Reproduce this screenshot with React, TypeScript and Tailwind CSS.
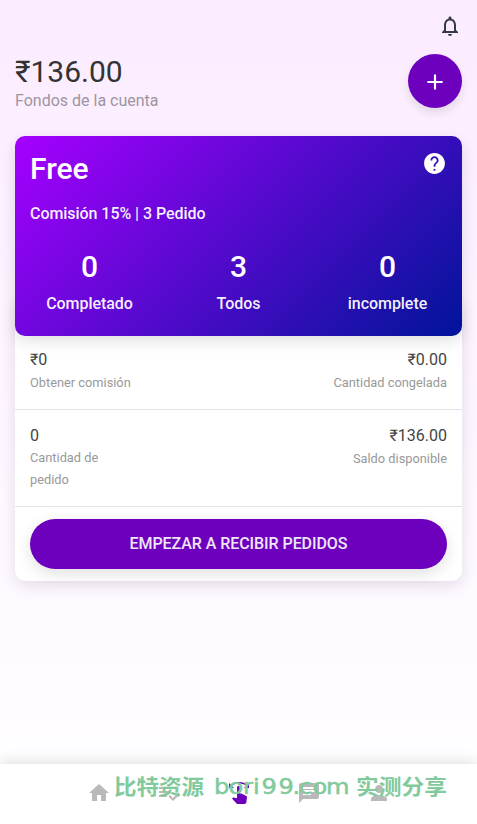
import React from "react";
import { MdAdd, MdChat, MdHome, MdNotificationsNone, MdPerson, MdSwipe } from "react-icons/md";

const stats = [
    { value: "0", label: "Completado" },
    { value: "3", label: "Todos" },
    { value: "0", label: "incomplete" },
];

type IconProps = { className?: string };

const tabs = [
    { name: "home", Icon: MdHome },
    { name: "orders", Icon: ListCheck },
    { name: "grab", Icon: MdSwipe, active: true },
    { name: "chat", Icon: MdChat },
    { name: "profile", Icon: MdPerson },
];

export default function App() {
    return (
        <div className="relative flex h-[824px] w-full flex-col overflow-hidden bg-linear-to-b from-[#fbecff] to-white font-[Roboto,sans-serif] text-[#333]">
            <Header />
            <main className="mt-7 flex-1 px-[15px]">
                <PlanCard />
                <Balances />
            </main>
            <TabBar />
            <Watermark />
        </div>
    );
}

function Header() {
    return (
        <header className="px-[15px]">
            <div className="flex h-[54px] justify-end pt-[14px]">
                <MdNotificationsNone className="size-6 text-[#343a40]" />
            </div>
            <div className="flex h-[54px] justify-between">
                <div>
                    <h1 className="text-[30px] leading-9">₹136.00</h1>
                    <p className="text-base leading-[22px] text-[#9d95a0]">Fondos de la cuenta</p>
                </div>
                <button className="flex size-[54px] items-center justify-center rounded-full bg-[#6c00bd] pt-0.5 text-white shadow-[0_5px_10px_rgba(0,0,0,0.1)]">
                    <MdAdd className="size-[26px]" />
                </button>
            </div>
        </header>
    );
}

function PlanCard() {
    return (
        <section className="relative z-10 h-[200px] rounded-[10px] bg-[linear-gradient(135deg,#a600ff_0%,#001499_100%)] px-[15px] pt-[15px] text-white shadow-[0_5px_15px_rgba(0,0,0,0.12)]">
            <div className="flex justify-between">
                <h2 className="text-[30px] leading-9 font-medium">Free</h2>
                <HelpIcon className="size-[25px]" />
            </div>
            <p className="mt-4 text-base leading-[22px] font-medium tracking-[-0.05px] text-white/95">Comisión 15% | 3 Pedido</p>
            <div className="-mx-[15px] mt-6 grid grid-cols-3 text-center">
                {stats.map(stat => (
                    <div key={stat.label}>
                        <div className="text-[30px] leading-9 font-medium">{stat.value}</div>
                        <div className="mt-2 text-base leading-[22px] font-medium tracking-[-0.05px] text-white/95">{stat.label}</div>
                    </div>
                ))}
            </div>
        </section>
    );
}

function Balances() {
    return (
        <section className="-mt-10 rounded-[10px] bg-white pt-10 shadow-[0_5px_15px_rgba(60,0,80,0.12)]">
            <div className="flex h-[74px] justify-between border-b border-[#e3e3e5] px-[15px] pt-3">
                <Amount value="₹0" label="Obtener comisión" />
                <Amount value="₹0.00" label="Cantidad congelada" right />
            </div>
            <div className="flex h-[97px] justify-between border-b border-[#e3e3e5] px-[15px] pt-[14px]">
                <Amount value="0" label="Cantidad de pedido" narrow />
                <Amount value="₹136.00" label="Saldo disponible" right />
            </div>
            <div className="px-[15px] py-3">
                <button className="h-[50px] w-full rounded-full bg-[#6c00bd] text-base font-medium tracking-[-0.06px] text-white/90 shadow-[0_5px_15px_rgba(0,0,0,0.12)]">
                    EMPEZAR A RECIBIR PEDIDOS
                </button>
            </div>
        </section>
    );
}

type AmountProps = {
    value: string;
    label: string;
    right?: boolean;
    narrow?: boolean;
};
function Amount({ value, label, right, narrow }: AmountProps) {
    return (
        <div className={right ? "text-right" : narrow ? "w-[90px]" : ""}>
            <div className="text-base leading-6 text-[#444]">{value}</div>
            <div className={narrow ? "-mt-px text-[12.8px] leading-[22px] text-[#999]" : "text-[12.8px] leading-[22px] text-[#999]"}>{label}</div>
        </div>
    );
}

function TabBar() {
    return (
        <nav className="flex h-[60px] justify-center bg-white pt-[17px] shadow-[0_0_15px_rgba(0,0,0,0.16)]">
            {tabs.map(({ name, Icon, active }) => (
                <a key={name} className={active ? "flex w-[70px] justify-center text-[#6c00bd]" : "flex w-[70px] justify-center text-[#b9b9b9]"}>
                    <Icon className="size-6" />
                </a>
            ))}
        </nav>
    );
}

function ListCheck({ className }: IconProps) {
    return (
        <svg viewBox="0 0 24 24" fill="currentColor" className={className}>
            <path d="M14 10H2v2h12v-2zm0-4H2v2h12V6zM2 16h8v-2H2v2zm19.5-4.5L23 13l-6.99 7-4.51-4.5L13 14l3.01 3 5.49-5.5z" />
        </svg>
    );
}

function HelpIcon({ className }: IconProps) {
    return (
        <svg viewBox="0 0 24 24" fill="currentColor" className={className}>
            <path d="M12 2C6.48 2 2 6.48 2 12s4.48 10 10 10 10-4.48 10-10S17.52 2 12 2zm.8 17h-1.6v-1.8h1.6V19zm2.07-7.75l-.9.92C13.25 12.9 12.8 13.5 12.8 15h-1.6v-.5c0-1.1.45-2.1 1.17-2.83l1.24-1.26c.37-.36.59-.86.59-1.41 0-1.2-1-2.2-2.2-2.2S9.8 7.8 9.8 9H8.1c0-2.15 1.75-3.9 3.9-3.9s3.9 1.75 3.9 3.9c0 .88-.46 1.68-1.03 2.25z" />
        </svg>
    );
}

function Watermark() {
    return (
        <svg className="pointer-events-none absolute bottom-0 left-0 z-20 h-[60px] w-[477px]" viewBox="0 764 477 60" fill="#82ca9c">
            <g fontFamily="'Noto Sans CJK SC', sans-serif" fontWeight="700" fontSize="21">
                <text x="114" y="794" textLength="90" lengthAdjust="spacingAndGlyphs">
                    比特资源
                </text>
                <text x="356" y="794" textLength="91" lengthAdjust="spacingAndGlyphs">
                    实测分享
                </text>
            </g>
            <text
                transform="scale(1.15 1)"
                x="186.1 198.8 211.3 220 227.4 242.2 254.4 259.7 271.8 283.5"
                y="794"
                fontFamily="'DejaVu Sans', sans-serif"
                fontSize="21"
                stroke="#82ca9c"
                strokeWidth="0.5">
                bori99.com
            </text>
        </svg>
    );
}
